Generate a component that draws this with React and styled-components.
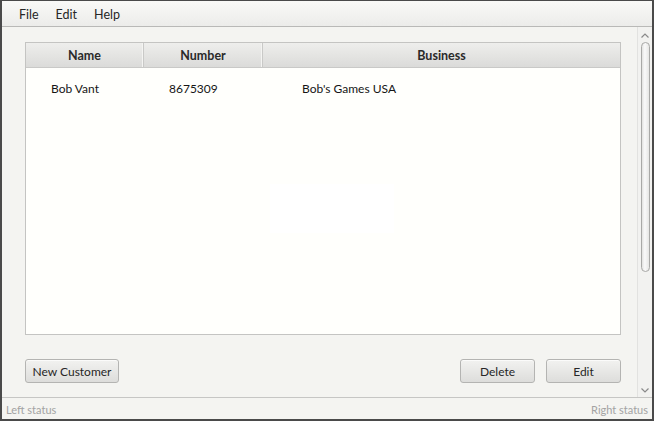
import styled, { createGlobalStyle } from 'styled-components';

const GlobalStyle = createGlobalStyle`
  html, body {
    margin: 0;
    padding: 0;
    background: #4a4a4a;
  }
  body {
    font-family: Lato, "Open Sans", sans-serif;
    font-size: 12px;
    color: #1e1e1e;
  }
`;

const customers = [{ name: 'Bob Vant', number: '8675309', business: "Bob's Games USA" }];

const columns = [
  { key: 'name', title: 'Name', width: 118, pad: 25 },
  { key: 'number', title: 'Number', width: 119, pad: 25 },
  { key: 'business', title: 'Business', pad: 39 },
];

function Table() {
  return (
    <STable>
      <SHeader>
        {columns.map((c) => (
          <SHeadCell key={c.key} $width={c.width}>
            {c.title}
          </SHeadCell>
        ))}
      </SHeader>
      <SBody>
        {customers.map((row) => (
          <SRow key={row.number}>
            {columns.map((c) => (
              <SCell key={c.key} $width={c.width} $pad={c.pad}>
                {row[c.key]}
              </SCell>
            ))}
          </SRow>
        ))}
        <SPlaceholder />
      </SBody>
    </STable>
  );
}

function ScrollBar() {
  return (
    <SScroll>
      <SArrow viewBox="0 0 8 5">
        <path d="M0.5 4.5 L4 1 L7.5 4.5" />
      </SArrow>
      <SThumb />
      <SSpacer />
      <SArrow viewBox="0 0 8 5">
        <path d="M0.5 0.5 L4 4 L7.5 0.5" />
      </SArrow>
    </SScroll>
  );
}

export default function App() {
  return (
    <>
      <GlobalStyle />
      <SFrame>
        <SWindow>
          <SMenuBar>
            <SMenuItem>File</SMenuItem>
            <SMenuItem>Edit</SMenuItem>
            <SMenuItem>Help</SMenuItem>
          </SMenuBar>
          <SMiddle>
            <SContent>
              <Table />
              <SActions>
                <SButton $width={94}>New Customer</SButton>
                <SGrow />
                <SButton $width={75}>Delete</SButton>
                <SButton $width={75}>Edit</SButton>
              </SActions>
            </SContent>
            <ScrollBar />
          </SMiddle>
          <SStatusBar>
            <span>Left status</span>
            <span>Right status</span>
          </SStatusBar>
        </SWindow>
      </SFrame>
    </>
  );
}

const SFrame = styled.div`
  width: 654px;
  height: 421px;
  padding: 1px 2px 2px 2px;
  box-sizing: border-box;
`;

const SWindow = styled.div`
  display: flex;
  flex-direction: column;
  height: 100%;
  background: #f4f4f1;
`;

const SMenuBar = styled.div`
  display: flex;
  align-items: center;
  height: 25px;
  padding-left: 9px;
  background: linear-gradient(#f9f9f7, #ececea);
  border-bottom: 1px solid #b9b9b7;
`;

const SMenuItem = styled.div`
  padding: 0 8px;
  font-size: 12.5px;
  line-height: 25px;
  margin-top: 1px;
  margin-right: 1px;
  color: #262626;
`;

const SMiddle = styled.div`
  display: flex;
  flex: 1;
  min-height: 0;
`;

const SContent = styled.div`
  display: flex;
  flex-direction: column;
  flex: 1;
  padding: 15px 16px 14px 23px;
`;

const STable = styled.div`
  display: flex;
  flex-direction: column;
  flex: 1;
  border: 1px solid #c4c4c2;
  background: #fffffc;
`;

const SHeader = styled.div`
  display: flex;
  height: 24px;
  background: linear-gradient(#eeeeec, #dbdbd9);
  border-bottom: 1px solid #c9c9c7;
`;

const SHeadCell = styled.div`
  display: flex;
  align-items: center;
  justify-content: center;
  box-sizing: border-box;
  ${(p) => (p.$width ? `width: ${p.$width}px;` : 'flex: 1;')}
  font-weight: 700;
  font-size: 12.5px;
  color: #2a2a2a;
  &:not(:last-child) {
    box-shadow: inset -1px 0 0 #f4f4f2;
    border-right: 1px solid #c9c9c7;
  }
`;

const SBody = styled.div`
  position: relative;
  flex: 1;
`;

const SRow = styled.div`
  display: flex;
  height: 40px;
  align-items: center;
`;

const SCell = styled.div`
  box-sizing: border-box;
  ${(p) => (p.$width ? `width: ${p.$width}px;` : 'flex: 1;')}
  padding-left: ${(p) => p.$pad}px;
  font-size: 12px;
  color: #151515;
`;

const SPlaceholder = styled.div`
  position: absolute;
  left: 244px;
  top: 116px;
  width: 124px;
  height: 49px;
  background: #ffffff;
`;

const SActions = styled.div`
  display: flex;
  gap: 11px;
  margin-top: 24px;
`;

const SGrow = styled.div`
  flex: 1;
`;

const SButton = styled.button`
  width: ${(p) => p.$width}px;
  height: 24px;
  padding: 0;
  font-family: inherit;
  font-size: 12px;
  color: #262626;
  border: 1px solid #b4b4b2;
  border-radius: 3px;
  background: linear-gradient(#f2f2f0, #dddddb);
  box-shadow: inset 0 1px 0 #fbfbfa;
`;

const SScroll = styled.div`
  display: flex;
  flex-direction: column;
  align-items: center;
  width: 15px;
  box-sizing: border-box;
  border-left: 1px solid #e2e2e0;
  background: #f2f2f0;
  padding: 6px 0 4px;
`;

const SArrow = styled.svg`
  width: 8px;
  height: 5px;
  fill: none;
  stroke: #8a8a8a;
  stroke-width: 1.2;
`;

const SThumb = styled.div`
  width: 9px;
  height: 230px;
  margin-top: 4px;
  box-sizing: border-box;
  border: 1px solid #a9a9a7;
  border-radius: 5px;
  background: linear-gradient(90deg, #e2e2e0, #fafafa 40%, #e6e6e4);
`;

const SSpacer = styled.div`
  flex: 1;
`;

const SStatusBar = styled.div`
  display: flex;
  justify-content: space-between;
  align-items: center;
  height: 22px;
  padding: 0 4px;
  border-top: 1px solid #c6c6c4;
  font-size: 11px;
  color: #a3a3a3;
  line-height: 1;
  padding-top: 1px;
  box-sizing: border-box;
`;
